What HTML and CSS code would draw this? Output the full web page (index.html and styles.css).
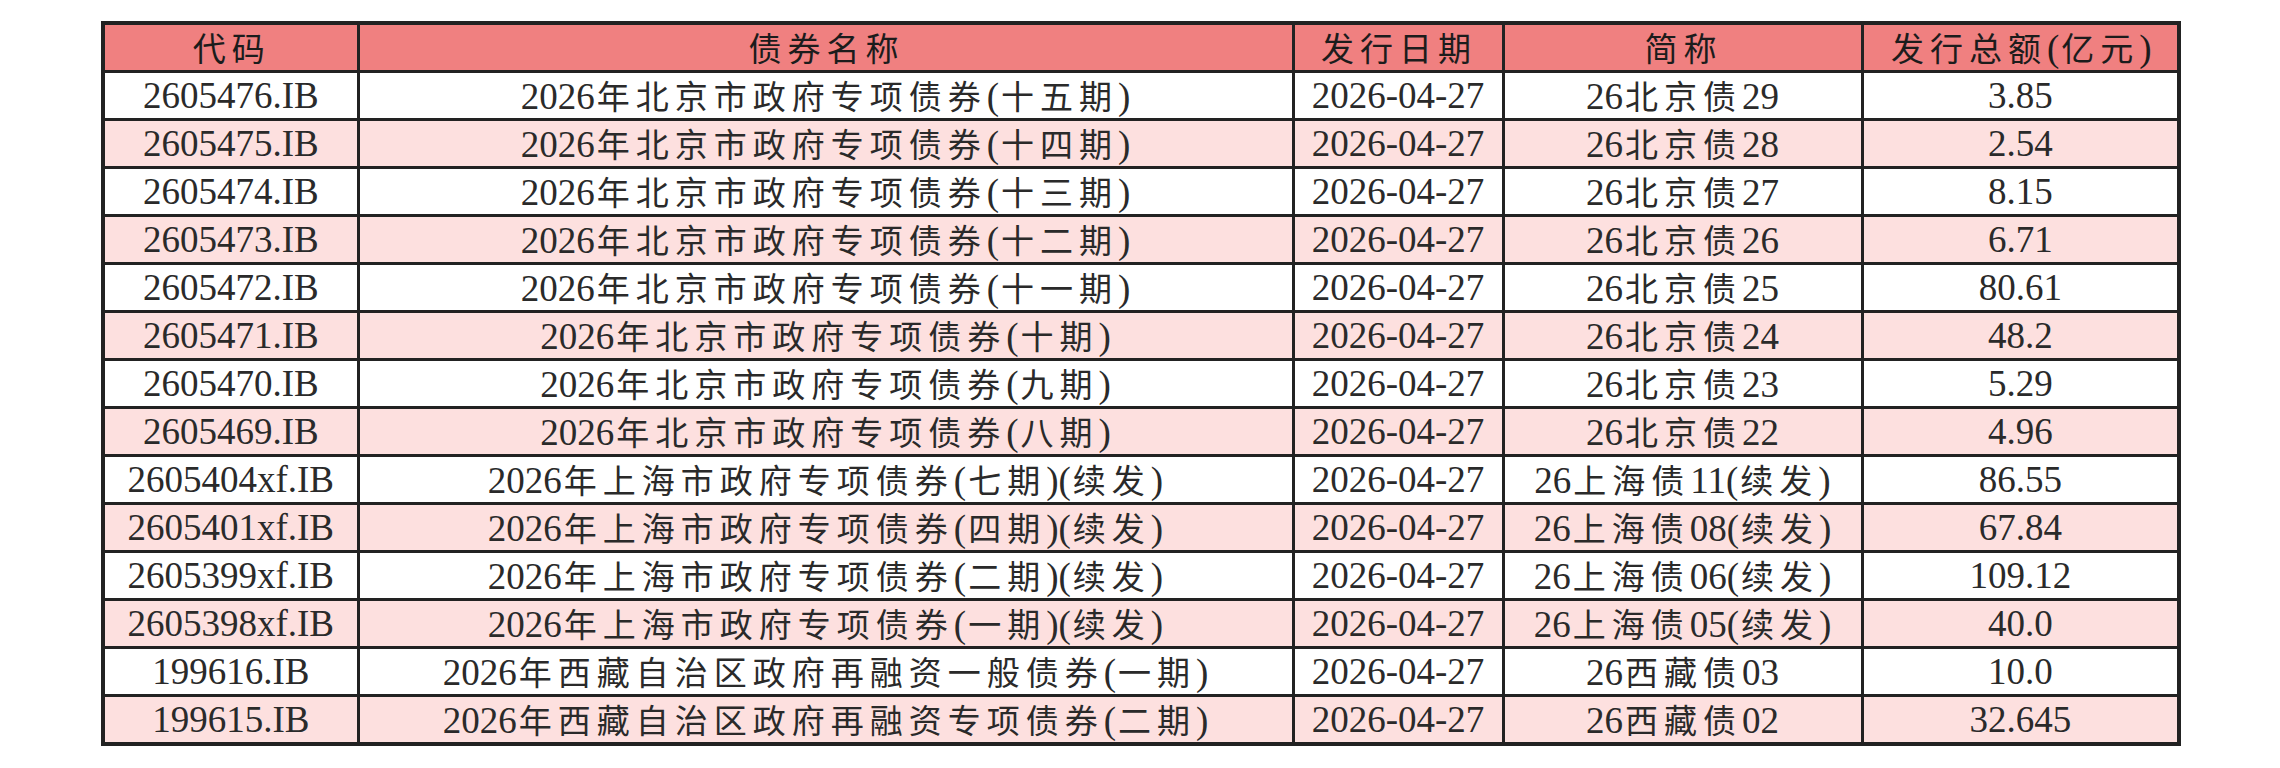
FILE: index.html
```html
<!DOCTYPE html>
<html lang="zh-CN">
<head>
<meta charset="utf-8">
<title>债券发行</title>
<link rel="stylesheet" href="styles.css">
</head>
<body>
<div class="page">
<table class="bonds">
<colgroup>
<col class="c-code"><col class="c-name"><col class="c-date"><col class="c-abbr"><col class="c-amt">
</colgroup>
<thead>
<tr><th><span class="k">代码</span></th><th><span class="k">债券名称</span></th><th><span class="k">发行日期</span></th><th><span class="k">简称</span></th><th><span class="k">发行总额</span>(<span class="k">亿元</span>)</th></tr>
</thead>
<tbody>
<tr><td>2605476.IB</td><td>2026<span class="k">年北京市政府专项债券</span>(<span class="k">十五期</span>)</td><td>2026-04-27</td><td>26<span class="k">北京债</span>29</td><td>3.85</td></tr>
<tr><td>2605475.IB</td><td>2026<span class="k">年北京市政府专项债券</span>(<span class="k">十四期</span>)</td><td>2026-04-27</td><td>26<span class="k">北京债</span>28</td><td>2.54</td></tr>
<tr><td>2605474.IB</td><td>2026<span class="k">年北京市政府专项债券</span>(<span class="k">十三期</span>)</td><td>2026-04-27</td><td>26<span class="k">北京债</span>27</td><td>8.15</td></tr>
<tr><td>2605473.IB</td><td>2026<span class="k">年北京市政府专项债券</span>(<span class="k">十二期</span>)</td><td>2026-04-27</td><td>26<span class="k">北京债</span>26</td><td>6.71</td></tr>
<tr><td>2605472.IB</td><td>2026<span class="k">年北京市政府专项债券</span>(<span class="k">十一期</span>)</td><td>2026-04-27</td><td>26<span class="k">北京债</span>25</td><td>80.61</td></tr>
<tr><td>2605471.IB</td><td>2026<span class="k">年北京市政府专项债券</span>(<span class="k">十期</span>)</td><td>2026-04-27</td><td>26<span class="k">北京债</span>24</td><td>48.2</td></tr>
<tr><td>2605470.IB</td><td>2026<span class="k">年北京市政府专项债券</span>(<span class="k">九期</span>)</td><td>2026-04-27</td><td>26<span class="k">北京债</span>23</td><td>5.29</td></tr>
<tr><td>2605469.IB</td><td>2026<span class="k">年北京市政府专项债券</span>(<span class="k">八期</span>)</td><td>2026-04-27</td><td>26<span class="k">北京债</span>22</td><td>4.96</td></tr>
<tr><td>2605404xf.IB</td><td>2026<span class="k">年上海市政府专项债券</span>(<span class="k">七期</span>)(<span class="k">续发</span>)</td><td>2026-04-27</td><td>26<span class="k">上海债</span>11(<span class="k">续发</span>)</td><td>86.55</td></tr>
<tr><td>2605401xf.IB</td><td>2026<span class="k">年上海市政府专项债券</span>(<span class="k">四期</span>)(<span class="k">续发</span>)</td><td>2026-04-27</td><td>26<span class="k">上海债</span>08(<span class="k">续发</span>)</td><td>67.84</td></tr>
<tr><td>2605399xf.IB</td><td>2026<span class="k">年上海市政府专项债券</span>(<span class="k">二期</span>)(<span class="k">续发</span>)</td><td>2026-04-27</td><td>26<span class="k">上海债</span>06(<span class="k">续发</span>)</td><td>109.12</td></tr>
<tr><td>2605398xf.IB</td><td>2026<span class="k">年上海市政府专项债券</span>(<span class="k">一期</span>)(<span class="k">续发</span>)</td><td>2026-04-27</td><td>26<span class="k">上海债</span>05(<span class="k">续发</span>)</td><td>40.0</td></tr>
<tr><td>199616.IB</td><td>2026<span class="k">年西藏自治区政府再融资一般债券</span>(<span class="k">一期</span>)</td><td>2026-04-27</td><td>26<span class="k">西藏债</span>03</td><td>10.0</td></tr>
<tr><td>199615.IB</td><td>2026<span class="k">年西藏自治区政府再融资专项债券</span>(<span class="k">二期</span>)</td><td>2026-04-27</td><td>26<span class="k">西藏债</span>02</td><td>32.645</td></tr>
</tbody>
</table>
</div>
</body>
</html>
```

FILE: styles.css
```css
html, body {
  margin: 0;
  padding: 0;
  background: #ffffff;
}

.page {
  padding: 21px 0 0 101px;
}

.bonds {
  border-collapse: collapse;
  table-layout: fixed;
  width: 2076px;
  border: 4px solid #222222;
  font-family: "Liberation Serif", "Noto Sans CJK SC", serif;
  font-size: 37px;
  color: #2a2a2a;
}

.c-code { width: 255px; }
.c-name { width: 935px; }
.c-date { width: 210px; }
.c-abbr { width: 359px; }
.c-amt  { width: 317px; }

.bonds th,
.bonds td {
  border: 3px solid #222222;
  height: 45px;
  padding: 0;
  text-align: center;
  vertical-align: middle;
  line-height: 40px;
  white-space: nowrap;
  font-weight: 400;
}

.k {
  display: inline-block;
  line-height: 40px;
  font-family: "Noto Sans CJK SC", sans-serif;
  font-size: 33px;
  font-weight: 400;
  letter-spacing: 6px;
  margin-left: 2px;
}

.bonds th {
  background: #f08080;
  color: #1c1c1c;
}

.bonds tbody tr:nth-child(even) td {
  background: #fde0df;
}

.bonds tbody tr:nth-child(odd) td {
  background: #ffffff;
}
```
